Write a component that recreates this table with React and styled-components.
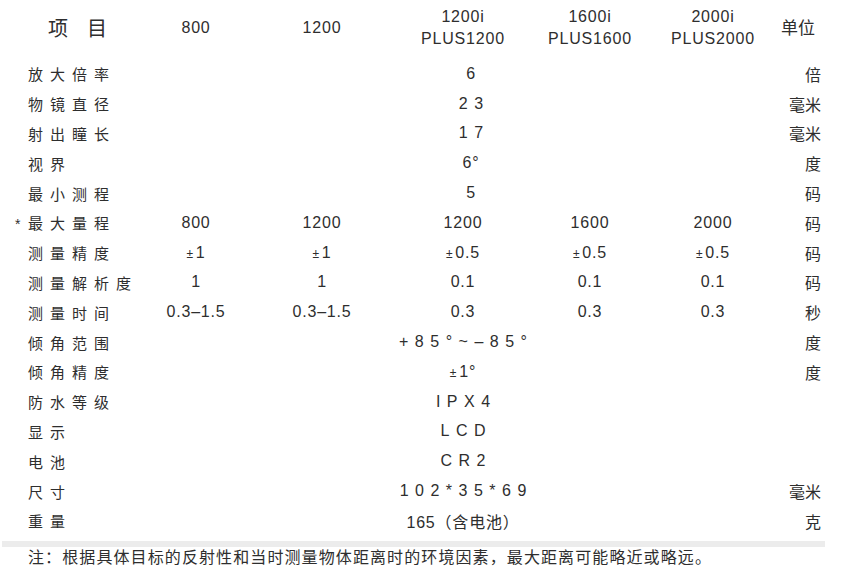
import React from "react";
import styled, { createGlobalStyle } from "styled-components";

const GlobalStyle = createGlobalStyle`
  body {
    margin: 0;
    background: #fff;
    font-family: "Liberation Sans", "Noto Sans CJK SC", sans-serif;
    color: #2e2e2e;
  }
`;

const columns = "134px 124px 128px 154px 100px 146px 35px";

const Page = styled.div`
  width: 843px;
  height: 580px;
  overflow: hidden;
`;

const HeadRow = styled.div`
  display: grid;
  grid-template-columns: ${columns};
  height: 59px;
  align-items: center;
`;

const HeadTitle = styled.div`
  padding-left: 48px;
  font-size: 20px;
  letter-spacing: 19px;
  margin-top: -4px;
`;

const HeadModel = styled.div`
  text-align: center;
  font-size: 16px;
  line-height: 22px;
  letter-spacing: 0.8px;
  margin-top: ${(p) => (p.$single ? "-4px" : "-4px")};
`;

const HeadUnit = styled.div`
  justify-self: end;
  padding-right: 6px;
  font-size: 17px;
  white-space: nowrap;
  margin-top: -6px;
`;

const Row = styled.div`
  display: grid;
  grid-template-columns: ${columns};
  height: 29.8px;
  align-items: center;
`;

const Label = styled.div`
  padding-left: 28px;
  font-size: 15px;
  letter-spacing: 7px;
  white-space: nowrap;
`;

const Star = styled.span`
  margin-left: -13px;
  margin-right: 7.5px;
  letter-spacing: 0;
  font-size: 14px;
`;

const Cell = styled.div`
  text-align: center;
  font-size: 16px;
  letter-spacing: 0.8px;
  white-space: nowrap;
`;

const SpanCell = styled.div`
  grid-column: 4;
  text-align: center;
  font-size: 16px;
  white-space: nowrap;
  letter-spacing: ${(p) => (p.$wide ? "6.5px" : "0.8px")};
  padding-left: ${(p) => (p.$shift ? "16px" : "0")};
  margin-right: ${(p) => (p.$wide ? "-6.5px" : "0")};
`;

const Unit = styled.div`
  grid-column: 7;
  justify-self: end;
  font-size: 16px;
  white-space: nowrap;
`;

const Pm = styled.span`
  font-size: 12px;
  margin-right: 2px;
`;

const Bar = styled.div`
  margin: 5px 18px 0 2px;
  height: 6px;
  background: #ececec;
`;

const Note = styled.div`
  padding-left: 28px;
  font-size: 16px;
  line-height: 22px;
  letter-spacing: 1.1px;
  white-space: nowrap;
`;

const pm = (v) => (
  <>
    <Pm>±</Pm>
    {v}
  </>
);

const rows = [
  { label: "放大倍率", span: "6", shift: true, unit: "倍" },
  { label: "物镜直径", span: "23", wide: true, shift: true, unit: "毫米" },
  { label: "射出瞳长", span: "17", wide: true, shift: true, unit: "毫米" },
  { label: "视界", span: "6°", shift: true, unit: "度" },
  { label: "最小测程", span: "5", shift: true, unit: "码" },
  { label: "最大量程", star: true, values: ["800", "1200", "1200", "1600", "2000"], unit: "码" },
  { label: "测量精度", values: [pm("1"), pm("1"), pm("0.5"), pm("0.5"), pm("0.5")], unit: "码" },
  { label: "测量解析度", values: ["1", "1", "0.1", "0.1", "0.1"], unit: "码" },
  { label: "测量时间", values: ["0.3–1.5", "0.3–1.5", "0.3", "0.3", "0.3"], unit: "秒" },
  { label: "倾角范围", span: "+85°~–85°", wide: true, unit: "度" },
  { label: "倾角精度", span: pm("1°"), unit: "度" },
  { label: "防水等级", span: "IPX4", wide: true },
  { label: "显示", span: "LCD", wide: true },
  { label: "电池", span: "CR2", wide: true },
  { label: "尺寸", span: "102*35*69", wide: true, unit: "毫米" },
  { label: "重量", span: "165（含电池）", unit: "克" },
];

const App = () => {
  return (
    <Page>
      <GlobalStyle />
      <HeadRow>
        <HeadTitle>项目</HeadTitle>
        <HeadModel $single>800</HeadModel>
        <HeadModel $single>1200</HeadModel>
        <HeadModel>
          1200i
          <br />
          PLUS1200
        </HeadModel>
        <HeadModel>
          1600i
          <br />
          PLUS1600
        </HeadModel>
        <HeadModel>
          2000i
          <br />
          PLUS2000
        </HeadModel>
        <HeadUnit>单位</HeadUnit>
      </HeadRow>
      {rows.map((r) => (
        <Row key={r.label}>
          <Label>
            {r.star && <Star>*</Star>}
            {r.label}
          </Label>
          {r.values
            ? r.values.map((v, i) => <Cell key={i}>{v}</Cell>)
            : (
              <SpanCell $wide={r.wide} $shift={r.shift}>
                {r.span}
              </SpanCell>
            )}
          {r.unit && <Unit>{r.unit}</Unit>}
        </Row>
      ))}
      <Bar />
      <Note>注：根据具体目标的反射性和当时测量物体距离时的环境因素，最大距离可能略近或略远。</Note>
    </Page>
  );
};

export default App;
